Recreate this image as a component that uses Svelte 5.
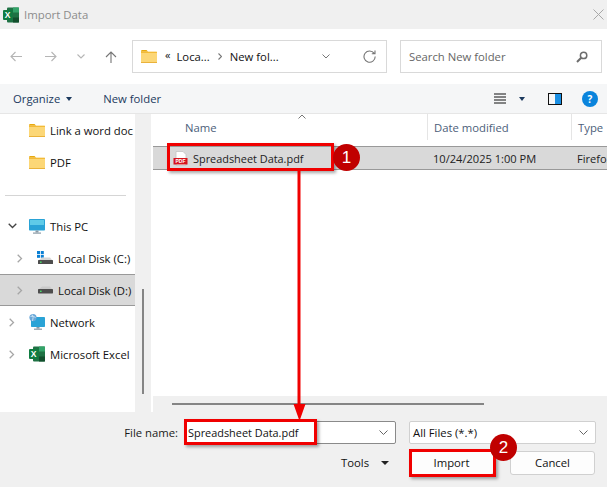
<script>
	const places = [
		{ label: "Link a word doc", icon: "folder", top: 0 },
		{ label: "PDF", icon: "folder" },
		{ sep: true },
		{ label: "This PC", icon: "pc", arrow: "open" },
		{ label: "Local Disk (C:)", icon: "diskc", arrow: "closed", deep: true },
		{ label: "Local Disk (D:)", icon: "disk", arrow: "closed", deep: true, selected: true },
		{ label: "Network", icon: "net", arrow: "closed" },
		{ label: "Microsoft Excel", icon: "xl", arrow: "closed" }
	];
</script>

{#snippet folder(w, h)}
	<svg width={w} height={h} viewBox="0 0 16 13">
		<path d="M0 1.2Q0 0 1.2 0H5.5L7.2 1.8H0Z" fill="#e8a90e" />
		<rect x="0" y="1.8" width="16" height="11.2" rx="0.8" fill="#fcd777" />
		<rect x="0" y="12" width="16" height="1" fill="#eab23a" />
		<rect x="0" y="1.8" width="16" height="1" fill="#f0b429" />
	</svg>
{/snippet}

{#snippet excel(w)}
	<svg width={w} height={w} viewBox="0 0 16 16">
		<rect x="4" y="0.5" width="12" height="15" rx="1" fill="#1f7244" />
		<rect x="10" y="0.5" width="6" height="5" fill="#33a369" />
		<rect x="10" y="10.5" width="6" height="5" fill="#124f2d" />
		<rect x="0" y="3" width="9.5" height="10" rx="1" fill="#107c41" />
		<text x="4.7" y="11" font-size="8.5" font-weight="700" fill="#fff" text-anchor="middle" font-family="Liberation Sans, sans-serif">X</text>
	</svg>
{/snippet}

{#snippet placeIcon(kind)}
	{#if kind == "folder"}
		{@render folder(16, 13)}
	{:else if kind == "pc"}
		<svg width="16" height="15" viewBox="0 0 16 15">
			<rect x="0" y="0" width="16" height="11.5" rx="0.8" fill="#2aa3d6" />
			<rect x="1" y="1" width="14" height="5" fill="#5fcbe8" />
			<rect x="6.5" y="11.5" width="3" height="2" fill="#8a9aa6" />
			<rect x="4" y="13.5" width="8" height="1.2" fill="#8a9aa6" />
		</svg>
	{:else if kind == "diskc"}
		<svg width="16" height="14" viewBox="0 0 16 14">
			<rect x="0" y="0" width="3" height="3" fill="#0a7fd4" />
			<rect x="3.8" y="0" width="3" height="3" fill="#0a7fd4" />
			<rect x="0" y="3.8" width="3" height="3" fill="#0a7fd4" />
			<rect x="3.8" y="3.8" width="3" height="3" fill="#0a7fd4" />
			<path d="M2 9L5 6.5H13L15 9Z" fill="#d5d5d5" />
			<rect x="1" y="9" width="15" height="4" rx="0.6" fill="#4d4d4d" />
			<rect x="3" y="10.5" width="1.6" height="1.4" fill="#49e06a" />
		</svg>
	{:else if kind == "disk"}
		<svg width="16" height="8" viewBox="0 0 16 8">
			<path d="M2 3L5 0.5H13L15 3Z" fill="#c9c9c9" />
			<rect x="1" y="3" width="15" height="4.4" rx="0.6" fill="#4d4d4d" />
			<rect x="3" y="4.6" width="1.6" height="1.4" fill="#49e06a" />
		</svg>
	{:else if kind == "net"}
		<svg width="16" height="16" viewBox="0 0 16 16">
			<rect x="2" y="3" width="14" height="10" rx="0.8" fill="#2aa3d6" />
			<rect x="7.5" y="13" width="3" height="1.6" fill="#8a9aa6" />
			<rect x="5" y="14.6" width="8" height="1.2" fill="#8a9aa6" />
			<circle cx="4" cy="3.6" r="3.6" fill="#6aa7d8" />
			<path d="M1.5 2.5Q4 1 6.5 3.5M3 0.5Q5 3 3.5 7" stroke="#d8ecf8" stroke-width="0.8" fill="none" />
		</svg>
	{:else}
		{@render excel(16)}
	{/if}
{/snippet}

<div class="dialog">
	<header class="title">
		<span class="app-icon">{@render excel(16)}</span>
		<span class="title-text">Import Data</span>
		<svg class="close" width="11" height="11" viewBox="0 0 11 11">
			<path d="M0.5 0.5L10.5 10.5M10.5 0.5L0.5 10.5" stroke="#a8a8a8" stroke-width="1" />
		</svg>
	</header>

	<div class="nav">
		<div class="nav-buttons">
			<svg class="back" width="12" height="11" viewBox="0 0 12 11"><path d="M12 5.5H1M5.5 1L1 5.5L5.5 10" stroke="#b5b5b5" stroke-width="1.1" fill="none" /></svg>
			<svg class="forward" width="12" height="11" viewBox="0 0 12 11"><path d="M0 5.5H11M6.5 1L11 5.5L6.5 10" stroke="#b5b5b5" stroke-width="1.1" fill="none" /></svg>
			<svg class="down" width="8" height="5" viewBox="0 0 8 5"><path d="M0.5 0.5L4 4L7.5 0.5" stroke="#b5b5b5" stroke-width="1.1" fill="none" /></svg>
			<svg class="up" width="12" height="12" viewBox="0 0 12 12"><path d="M6 12V1M1 6L6 1L11 6" stroke="#757575" stroke-width="1.1" fill="none" /></svg>
		</div>
		<div class="address">
			{@render folder(16, 13)}
			<span class="crumb-more">«</span>
			<span class="crumb">Loca...</span>
			<svg width="4" height="7" viewBox="0 0 4 7"><path d="M0.5 0.5L3.5 3.5L0.5 6.5" stroke="#777" stroke-width="1.1" fill="none" /></svg>
			<span class="crumb">New fol...</span>
			<span class="spacer"></span>
			<svg class="address-down" width="8" height="5" viewBox="0 0 8 5"><path d="M0.5 0.5L4 4L7.5 0.5" stroke="#777" stroke-width="1" fill="none" /></svg>
			<svg class="refresh" width="13" height="13" viewBox="0 0 13 13"><path d="M11.2 3.4A5.6 5.6 0 1 0 12.2 6.5M12 0.6V3.8H8.8" stroke="#757575" stroke-width="1.1" fill="none" /></svg>
		</div>
		<div class="search">
			<span>Search New folder</span>
			<svg width="12" height="12" viewBox="0 0 12 12"><circle cx="7.6" cy="4.4" r="3.2" stroke="#6d6d6d" stroke-width="1.5" fill="none" /><path d="M5.2 6.8L1 11" stroke="#6d6d6d" stroke-width="2" /></svg>
		</div>
	</div>

	<div class="toolbar">
		<span class="tool">Organize</span>
		<span class="caret navy"></span>
		<span class="tool new-folder">New folder</span>
		<span class="spacer"></span>
		<svg class="view" width="12" height="11" viewBox="0 0 12 11"><path d="M0 1H12M0 4H12M0 7H12M0 10H12" stroke="#111" stroke-width="1" /></svg>
		<span class="caret navy view-caret"></span>
		<span class="pane-icon"><i></i></span>
		<span class="help">?</span>
	</div>

	<div class="main">
		<nav class="sidebar">
			{#each places as p}
				{#if p.sep}
					<div class="sep"></div>
				{:else}
					<div class="place" class:selected={p.selected} class:deep={p.deep}>
						<span class="twist">
							{#if p.arrow == "open"}
								<svg width="9" height="6" viewBox="0 0 9 6"><path d="M0.7 0.7L4.5 4.5L8.3 0.7" stroke="#444" stroke-width="1.3" fill="none" /></svg>
							{:else if p.arrow == "closed"}
								<svg width="6" height="9" viewBox="0 0 6 9"><path d="M0.7 0.7L4.5 4.5L0.7 8.3" stroke="#a6a6a6" stroke-width="1.3" fill="none" /></svg>
							{/if}
						</span>
						<span class="place-icon">{@render placeIcon(p.icon)}</span>
						<span class="place-label">{p.label}</span>
					</div>
				{/if}
			{/each}
		</nav>
		<div class="rail"><div class="rail-thumb"></div></div>
		<section class="files">
			<div class="columns">
				<span class="col-name">Name</span>
				<span class="col-date">Date modified</span>
				<span class="col-type">Type</span>
				<svg class="sort" width="8" height="5" viewBox="0 0 8 5"><path d="M0.5 4.5L4 1L7.5 4.5" stroke="#777" stroke-width="1" fill="none" /></svg>
			</div>
			<div class="file-row">
				<span class="col-name file-name">
					<svg width="15" height="15" viewBox="0 0 15 15">
						<path d="M3 0.5H10L13 3.5V14.5H3Z" fill="#fff" stroke="#c4c4c4" stroke-width="0.8" />
						<rect x="0.5" y="7" width="14" height="6.5" fill="#d6141c" />
						<text x="7.5" y="12" font-size="5" font-weight="700" fill="#fff" text-anchor="middle" font-family="Liberation Sans, sans-serif">PDF</text>
					</svg>
					<span>Spreadsheet Data.pdf</span>
				</span>
				<span class="col-date">10/24/2025 1:00 PM</span>
				<span class="col-type">Firefox</span>
			</div>
			<span class="spacer"></span>
			<div class="hscroll"><div class="hthumb"></div></div>
		</section>
	</div>

	<footer class="bottom">
		<div class="bottom-row">
			<label class="name-label" for="fname">File name:</label>
			<div class="combo name-combo">
				<input id="fname" value="Spreadsheet Data.pdf" readonly />
				<svg width="9" height="5" viewBox="0 0 9 5"><path d="M0.5 0.5L4.5 4.5L8.5 0.5" stroke="#666" stroke-width="1" fill="none" /></svg>
			</div>
			<div class="combo type-combo">
				<span>All Files (*.*)</span>
				<svg width="9" height="5" viewBox="0 0 9 5"><path d="M0.5 0.5L4.5 4.5L8.5 0.5" stroke="#666" stroke-width="1" fill="none" /></svg>
			</div>
		</div>
		<div class="bottom-row actions">
			<span class="tools">Tools</span>
			<span class="caret dark"></span>
			<button class="btn import">Import</button>
			<button class="btn cancel">Cancel</button>
		</div>
	</footer>

	<!-- red callouts drawn over the dialog -->
	<div class="mark mark-file"></div>
	<div class="mark mark-input"></div>
	<div class="mark mark-import"></div>
	<svg class="arrow" width="20" height="252" viewBox="0 0 20 252">
		<path d="M9 0V236" stroke="#f00000" stroke-width="3" />
		<path d="M3.5 233H15.5L9.5 250Z" fill="#f00000" />
	</svg>
	<div class="badge badge-one">1</div>
	<div class="badge badge-two">2</div>
</div>

<style>
	:global(body) {
		margin: 0;
	}
	.dialog {
		position: relative;
		width: 607px;
		height: 487px;
		overflow: hidden;
		background: #fff;
		display: flex;
		flex-direction: column;
		font-family: "Open Sans", "Noto Sans", sans-serif;
		font-size: 11.3px;
		color: #111;
	}
	svg {
		display: block;
		flex: none;
	}
	.spacer {
		flex: 1;
	}

	.title {
		height: 29px;
		background: #f0f0f0;
		display: flex;
		align-items: center;
		padding: 0 3px;
	}
	.app-icon {
		margin-right: 5px;
	}
	.title-text {
		flex: 1;
		color: #8c8c8c;
		font-size: 11.4px;
	}

	.nav {
		height: 55px;
		display: flex;
		align-items: center;
		box-sizing: border-box;
		padding: 0 5px 0 0;
	}
	.nav-buttons {
		width: 132px;
		display: flex;
		align-items: center;
	}
	.back {
		margin-left: 10px;
	}
	.forward {
		margin-left: 23px;
	}
	.down {
		margin-left: 20px;
	}
	.up {
		margin-left: 20px;
	}
	.address,
	.search {
		height: 33px;
		box-sizing: border-box;
		border: 1.5px solid #d9d9d9;
		display: flex;
		align-items: center;
	}
	.address {
		width: 255px;
		padding: 0 10px 0 8px;
		gap: 8px;
	}
	.crumb-more {
		margin-right: -2px;
		font-size: 11px;
		position: relative;
		top: -2px;
	}
	.address-down {
		margin-right: 25px;
	}
	.search {
		width: 202px;
		margin-left: 13px;
		padding: 0 13px 0 8px;
		justify-content: space-between;
		color: #666;
	}

	.toolbar {
		height: 30px;
		background: #f5f6f7;
		border-bottom: 1px solid #e6e6e6;
		box-sizing: border-box;
		display: flex;
		align-items: center;
		padding: 0 9px 0 13px;
		color: #1c3a5e;
	}
	.caret {
		width: 0;
		height: 0;
		border-left: 3.5px solid transparent;
		border-right: 3.5px solid transparent;
		border-top: 4px solid #1c3a5e;
		margin-left: 6px;
	}
	.caret.dark {
		border-left-width: 4px;
		border-right-width: 4px;
		border-top-color: #222;
		margin-left: 12px;
	}
	.new-folder {
		margin-left: 31px;
	}
	.view {
		margin-right: 1px;
	}
	.view-caret {
		margin-left: 12px;
	}
	.pane-icon {
		width: 14px;
		height: 12px;
		box-sizing: border-box;
		border: 1px solid #111;
		margin-left: 23px;
		display: flex;
		justify-content: flex-end;
	}
	.pane-icon i {
		display: block;
		width: 6px;
		background: #1a8fe3;
	}
	.help {
		width: 16px;
		height: 16px;
		border-radius: 50%;
		background: #0a84dc;
		color: #fff;
		font-weight: 700;
		font-size: 10px;
		line-height: 16px;
		text-align: center;
		margin-left: 20px;
	}

	.main {
		height: 298px;
		display: flex;
	}
	.sidebar {
		width: 135px;
		flex: none;
		overflow: hidden;
	}
	.place {
		height: 32px;
		box-sizing: border-box;
		display: flex;
		align-items: center;
		white-space: nowrap;
	}
	.place.selected {
		background: #d9d9d9;
		border-top: 1px solid #999;
		border-bottom: 1px solid #999;
	}
	.twist {
		width: 29px;
		flex: none;
		display: flex;
		justify-content: center;
		box-sizing: border-box;
		padding-right: 5px;
	}
	.place.deep .twist {
		width: 37px;
		padding-right: 0;
		justify-content: flex-start;
		padding-left: 17px;
	}
	.place-icon {
		width: 21px;
		flex: none;
	}
	.sep {
		height: 1px;
		margin: 17px 9px 14px 5px;
		background: #d5d5d5;
	}
	.rail {
		width: 16px;
		flex: none;
		background: #f0f0f0;
		position: relative;
		margin-right: 2px;
	}
	.rail-thumb {
		position: absolute;
		left: 7px;
		top: 175px;
		width: 2px;
		height: 105px;
		background: #858585;
	}

	.files {
		flex: 1;
		display: flex;
		flex-direction: column;
		min-width: 0;
	}
	.columns,
	.file-row {
		display: grid;
		grid-template-columns: 260px 144px 1fr;
		padding-left: 14px;
		white-space: nowrap;
	}
	.columns {
		height: 32px;
		position: relative;
		color: #4c607a;
	}
	.columns .col-name,
	.columns .col-date,
	.columns .col-type {
		height: 26px;
		line-height: 27px;
	}
	.columns .col-name {
		padding-left: 18px;
	}
	.columns .col-date,
	.columns .col-type {
		padding-left: 6px;
		border-left: 1.5px solid #e5e5e5;
	}
	.sort {
		position: absolute;
		left: 145px;
		top: 0;
	}
	.file-row {
		height: 24px;
		box-sizing: border-box;
		align-items: center;
		background: #d9d9d9;
		border-top: 1px solid #999;
		border-bottom: 1px solid #999;
		color: #222;
	}
	.file-name {
		display: flex;
		align-items: center;
		gap: 5px;
		padding-left: 6px;
		font-size: 10.9px;
	}
	.file-row .col-date,
	.file-row .col-type {
		padding-left: 6px;
		font-size: 11.1px;
	}
	.hscroll {
		height: 16px;
		background: #f0f0f0;
		position: relative;
	}
	.hthumb {
		position: absolute;
		left: 19px;
		top: 7px;
		width: 312px;
		height: 2px;
		background: #858585;
	}

	.bottom {
		flex: 1;
		background: #f0f0f0;
		display: flex;
		flex-direction: column;
		padding-top: 9px;
		box-sizing: border-box;
	}
	.bottom-row {
		display: flex;
		align-items: center;
	}
	.name-label {
		width: 178px;
		text-align: right;
		color: #1a1a1a;
	}
	.combo {
		height: 23px;
		box-sizing: border-box;
		background: #fff;
		border: 1px solid #a0a0a0;
		border-radius: 2px;
		display: flex;
		align-items: center;
		padding-right: 7px;
	}
	.name-combo {
		width: 211px;
		margin-left: 7px;
		border-color: #8a8a8a;
	}
	.name-combo input {
		flex: 1;
		min-width: 0;
		border: 0;
		outline: 0;
		padding: 0 0 0 2px;
		background: transparent;
		font: inherit;
		font-size: 10.9px;
		color: #111;
	}
	.type-combo {
		width: 187px;
		margin-left: 13px;
		justify-content: space-between;
		padding-left: 3px;
		border-color: #d0d0d0;
	}
	.actions {
		margin-top: 7px;
	}
	.tools {
		margin-left: 341px;
		width: 28px;
		position: relative;
		top: -1px;
	}
	.btn {
		height: 24px;
		box-sizing: border-box;
		border: 1px solid #d0d0d0;
		border-radius: 3px;
		background: #fdfdfd;
		font: inherit;
		color: #111;
		padding: 0 0 2px;
	}
	.import {
		width: 85px;
		margin-left: 20px;
	}
	.cancel {
		width: 85px;
		margin-left: 16px;
	}

	.mark {
		position: absolute;
		box-sizing: border-box;
		border: 3px solid #f00000;
		box-shadow: 2px 2px 3px rgba(0, 0, 0, 0.35);
	}
	.mark-file {
		left: 167px;
		top: 143px;
		width: 167px;
		height: 28px;
	}
	.mark-input {
		left: 184px;
		top: 419px;
		width: 133px;
		height: 26px;
	}
	.mark-import {
		left: 409px;
		top: 449px;
		width: 87px;
		height: 28px;
	}
	.arrow {
		position: absolute;
		left: 290px;
		top: 171px;
	}
	.badge {
		position: absolute;
		width: 27px;
		height: 27px;
		border-radius: 50%;
		background: #c00000;
		color: #fff;
		font-size: 17px;
		line-height: 27px;
		text-align: center;
		font-family: "Liberation Sans", sans-serif;
	}
	.badge-one {
		left: 333px;
		top: 144px;
	}
	.badge-two {
		left: 490px;
		top: 434px;
	}
</style>
